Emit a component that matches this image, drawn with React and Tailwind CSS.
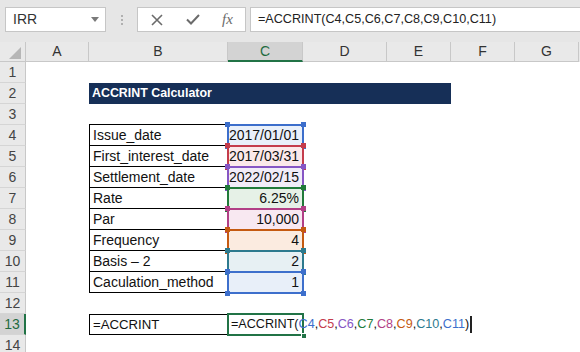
import React from 'react';

const COLS = [
  { key: 'A', w: 'w-[63px]' },
  { key: 'B', w: 'w-[139px]' },
  { key: 'C', w: 'w-[75px]' },
  { key: 'D', w: 'w-[84px]' },
  { key: 'E', w: 'w-[64px]' },
  { key: 'F', w: 'w-[64px]' },
  { key: 'G', w: 'w-[64px]' },
];

// 參照範圍顏色 (Excel 公式編輯時的彩色框)
const ROWS = [
  { label: 'Issue_date', value: '2017/01/01', border: 'border-[#3c6ecb]', sq: 'bg-[#3c6ecb]', fill: 'bg-[#e9f0fa]' },
  { label: 'First_interest_date', value: '2017/03/31', border: 'border-[#c43c4c]', sq: 'bg-[#c43c4c]', fill: 'bg-[#fbe9ea]' },
  { label: 'Settlement_date', value: '2022/02/15', border: 'border-[#8656c4]', sq: 'bg-[#8656c4]', fill: 'bg-[#f1ecf8]' },
  { label: 'Rate', value: '6.25%', border: 'border-[#217a3a]', sq: 'bg-[#217a3a]', fill: 'bg-[#e6f1e7]' },
  { label: 'Par', value: '10,000', border: 'border-[#b23f86]', sq: 'bg-[#b23f86]', fill: 'bg-[#f8e8f1]' },
  { label: 'Frequency', value: '4', border: 'border-[#c55a11]', sq: 'bg-[#c55a11]', fill: 'bg-[#fbebe0]' },
  { label: 'Basis – 2', value: '2', border: 'border-[#2d7a8e]', sq: 'bg-[#2d7a8e]', fill: 'bg-[#e7f0f3]' },
  { label: 'Caculation_method', value: '1', border: 'border-[#3d6fcc]', sq: 'bg-[#3d6fcc]', fill: 'bg-[#e8eff9]' },
];

const REFS = [
  ['C4', 'text-[#3c6ecb]'],
  ['C5', 'text-[#c43c4c]'],
  ['C6', 'text-[#8656c4]'],
  ['C7', 'text-[#217a3a]'],
  ['C8', 'text-[#b23f86]'],
  ['C9', 'text-[#c55a11]'],
  ['C10', 'text-[#2d7a8e]'],
  ['C11', 'text-[#3d6fcc]'],
];

function RowHead({ n, active }) {
  return (
    <div
      className={
        'w-[26px] h-[21px] shrink-0 flex items-center justify-center text-[14px] border-b border-[#d5d5d5] ' +
        (active
          ? 'bg-[#d3d3d3] text-[#1f6b3f] border-r-2 border-r-[#217346]'
          : 'bg-[#e9e9e9] text-[#444] border-r border-r-[#c8c8c8]')
      }
    >
      {n}
    </div>
  );
}

function RefCell({ row }) {
  return (
    <div className={'relative w-[75px] h-[21px] shrink-0 flex items-center justify-end pr-[4px] text-[14px] ' + row.fill}>
      <span className="relative">{row.value}</span>
      <div className={'absolute -top-[1px] -left-[1px] -right-[1px] -bottom-[1px] border-2 ' + row.border} />
      <div className={'absolute -top-[3px] -left-[3px] w-[5px] h-[5px] ' + row.sq} />
      <div className={'absolute -top-[3px] -right-[3px] w-[5px] h-[5px] ' + row.sq} />
      <div className={'absolute -bottom-[3px] -left-[3px] w-[5px] h-[5px] ' + row.sq} />
      <div className={'absolute -bottom-[3px] -right-[3px] w-[5px] h-[5px] ' + row.sq} />
    </div>
  );
}

function Formula() {
  return (
    <span className="whitespace-nowrap">
      =ACCRINT(
      {REFS.map(([r, c], i) => (
        <React.Fragment key={r}>
          <span className={c}>{r}</span>
          {i < REFS.length - 1 ? ',' : ''}
        </React.Fragment>
      ))}
      )
    </span>
  );
}

export default function App() {
  return (
    <div
      className="w-[580px] h-[352px] overflow-hidden bg-white text-[#111]"
      style={{ fontFamily: '"Liberation Sans", Arial, sans-serif' }}
    >
      {/* 公式列 */}
      <div className="h-[42px] bg-[#e6e6e6] flex items-start pt-[7px] pl-[5px]">
        <div className="w-[101px] h-[25px] bg-white border border-[#c6c6c6] flex items-center justify-between pl-[7px] pr-[6px]">
          <span className="text-[14px] text-[#333]">IRR</span>
          <svg width="8" height="5" viewBox="0 0 8 5"><path d="M0 0h8L4 5z" fill="#7a7a7a" /></svg>
        </div>
        <div className="w-[31px] h-[25px] flex flex-col items-center justify-center gap-[2px]">
          <div className="w-[2px] h-[2px] bg-[#b0b0b0]" />
          <div className="w-[2px] h-[2px] bg-[#b0b0b0]" />
          <div className="w-[2px] h-[2px] bg-[#b0b0b0]" />
        </div>
        <div className="w-[109px] h-[25px] bg-white border border-[#c6c6c6] flex items-center">
          <div className="w-[38px] flex justify-center">
            <svg width="12" height="12" viewBox="0 0 12 12"><path d="M1 1l10 10M11 1L1 11" stroke="#6b6b6b" strokeWidth="1.6" /></svg>
          </div>
          <div className="w-[34px] flex justify-center">
            <svg width="14" height="11" viewBox="0 0 14 11"><path d="M1 5.5l4 4L13 1" stroke="#6b6b6b" strokeWidth="2" fill="none" /></svg>
          </div>
          <div className="w-[35px] flex justify-center">
            <span className="text-[15px] italic text-[#6b6b6b]" style={{ fontFamily: '"Liberation Serif", serif' }}>fx</span>
          </div>
        </div>
        <div className="ml-[4px] flex-1 h-[25px] bg-white border border-r-0 border-[#c6c6c6] flex items-center pl-[7px] text-[12.6px] text-[#222]">
          =ACCRINT(C4,C5,C6,C7,C8,C9,C10,C11)
        </div>
      </div>

      {/* 欄標題 */}
      <div className="flex h-[20px] bg-[#e9e9e9]">
        <div className="w-[26px] h-[20px] shrink-0 border-r border-[#c8c8c8] border-b border-b-[#c8c8c8] flex items-end justify-end pr-[4px] pb-[2px]">
          <svg width="12" height="12" viewBox="0 0 12 12"><path d="M12 0V12H0z" fill="#b6b6b6" /></svg>
        </div>
        {COLS.map((c) => (
          <div
            key={c.key}
            className={
              c.w +
              ' shrink-0 flex items-center justify-center text-[14px] border-r border-[#c8c8c8] ' +
              (c.key === 'C'
                ? 'bg-[#d3d3d3] text-[#1f6b3f] border-b-2 border-b-[#217346]'
                : 'text-[#333] border-b border-b-[#c8c8c8]')
            }
          >
            {c.key}
          </div>
        ))}
      </div>

      {/* 列 1 */}
      <div className="flex">
        <RowHead n={1} />
      </div>

      {/* 列 2 標題 */}
      <div className="flex">
        <RowHead n={2} />
        <div className="w-[63px] shrink-0" />
        <div className="w-[362px] h-[21px] shrink-0 bg-[#162f57] flex items-center pl-[3px]">
          <span className="text-[12.4px] font-bold text-white">ACCRINT Calculator</span>
        </div>
      </div>

      {/* 列 3 */}
      <div className="flex">
        <RowHead n={3} />
      </div>

      {/* 列 4-11 */}
      {ROWS.map((row, i) => (
        <div key={row.label} className="flex">
          <RowHead n={i + 4} />
          <div className="w-[63px] shrink-0" />
          <div
            className={
              'w-[139px] h-[21px] shrink-0 flex items-center pl-[3px] text-[14px] border-l border-r border-b border-black ' +
              (i === 0 ? 'border-t -mt-px h-[22px]' : '')
            }
          >
            {row.label}
          </div>
          <RefCell row={row} />
        </div>
      ))}

      {/* 列 12 */}
      <div className="flex">
        <RowHead n={12} />
      </div>

      {/* 列 13 */}
      <div className="flex">
        <RowHead n={13} active />
        <div className="w-[63px] shrink-0" />
        <div className="w-[139px] h-[21px] shrink-0 flex items-center pl-[3px] text-[13.2px] border border-black">
          =ACCRINT
        </div>
        <div className="relative w-[75px] h-[21px] shrink-0 flex items-center pl-[3px] text-[12.6px] overflow-visible">
          <div className="absolute -top-[1px] -left-[1px] -right-[1px] -bottom-[1px] border-2 border-[#217346]" />
          <div className="absolute -bottom-[4px] -right-[4px] w-[6px] h-[6px] bg-[#217346] border border-white" />
          <span className="relative flex items-center">
            <Formula />
            <span className="ml-[1px] w-[2px] h-[17px] bg-[#222]" />
          </span>
        </div>
      </div>

      {/* 列 14 */}
      <div className="flex">
        <RowHead n={14} />
      </div>
    </div>
  );
}
